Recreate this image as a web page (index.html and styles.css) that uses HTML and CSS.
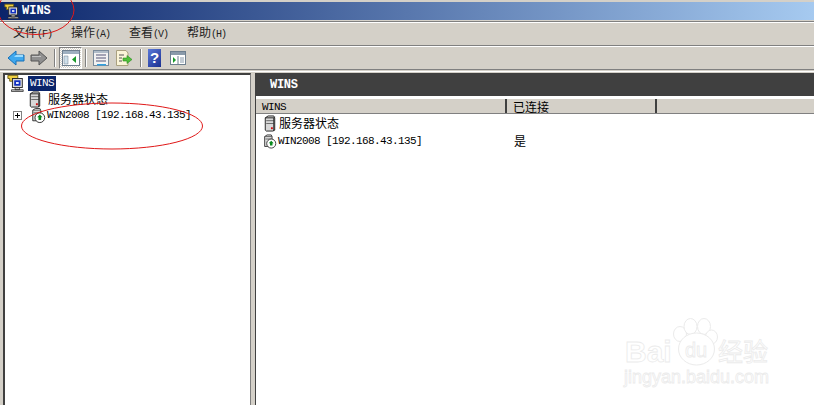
FILE: index.html
```html
<!DOCTYPE html>
<html lang="zh">
<head>
<meta charset="utf-8">
<title>WINS</title>
<link rel="stylesheet" href="styles.css">
</head>
<body>
<svg class="defs" width="0" height="0">
  <defs>
    <symbol id="server" viewBox="0 0 14 18">
      <path d="M2 3 L5 1 H11 L12 3 V16 L10 17 H3 L2 16 Z" fill="#d8d8d8" stroke="#222"/>
      <path d="M2 3 H11 L12 2" fill="none" stroke="#222"/>
      <path d="M3 6 H11 M3 9 H11" stroke="#666"/>
      <path d="M11 3 V17" stroke="#222"/>
      <rect x="8" y="13" width="2" height="2" fill="#d01010"/>
    </symbol>
    <symbol id="winsrv" viewBox="0 0 17 18">
      <path d="M2 3 L5 1 H10 L11 3 V15 H2 Z" fill="#ddd" stroke="#222"/>
      <path d="M2 3 H11 M3 6 H10" stroke="#555" fill="none"/>
      <circle cx="10" cy="11.500" r="5.500" fill="#fff" stroke="#222"/>
      <path d="M10 8 L13 11 H11.500 V14 H8.500 V11 H7 Z" fill="#0a8a1e"/>
    </symbol>
    <symbol id="wins" viewBox="0 0 20 20">
      <path d="M1 1.500 H12 V5 H7 V8 H3 V5 H1 Z" fill="#f0d040" stroke="#6a5a10"/>
      <rect x="6" y="5" width="11" height="10" fill="#d8d8d8" stroke="#222"/>
      <rect x="8" y="7" width="7" height="6" fill="#1030c0"/>
      <rect x="10" y="9" width="3" height="2" fill="#fff"/>
      <path d="M5 17.500 H18 V19.500 H5 Z M9 15 H14 V17.500 H9 Z" fill="#c8c8c8" stroke="#222" stroke-width=".8"/>
    </symbol>
  </defs>
</svg>

<header class="titlebar">
  <svg class="title-icon"><use href="#wins"/></svg>
  <span class="title-text">WINS</span>
</header>

<nav class="menubar">
  <span class="menu-item">文件<span class="mono paren">(F)</span></span>
  <span class="menu-item">操作<span class="mono paren">(A)</span></span>
  <span class="menu-item">查看<span class="mono paren">(V)</span></span>
  <span class="menu-item">帮助<span class="mono paren">(H)</span></span>
</nav>

<div class="toolbar">
  <svg class="tool" viewBox="0 0 18 16"><path d="M1 8 L9 1 V5 H17 V11 H9 V15 Z" fill="#3fa8ee" stroke="#1670b8"/><path d="M9 5 H16 V7 H7 Z" fill="#9bdcff"/></svg>
  <svg class="tool tool-gap" viewBox="0 0 18 16"><path d="M17 8 L9 1 V5 H1 V11 H9 V15 Z" fill="#8f8f8f" stroke="#555"/><path d="M2 6 H11 V7 H2 Z" fill="#c4c4c4"/></svg>
  <span class="sep sep-a"></span>
  <span class="tool-on">
    <svg class="tool-wide" viewBox="0 0 18 16"><rect x=".5" y=".5" width="17" height="15" fill="#fff" stroke="#6e7f8f"/><rect x="1" y="1" width="16" height="3" fill="#9fb0c0"/><path d="M2 6 H6 V14 H2 Z" fill="#cfe0ea" stroke="#6e7f8f" stroke-width=".5"/><path d="M14 6 L10 9.500 L14 13 Z" fill="#1a9a2a"/></svg>
  </span>
  <span class="sep sep-b"></span>
  <svg class="tool" viewBox="0 0 18 16"><rect x="1.500" y=".5" width="15" height="15" fill="#f2f2f2" stroke="#7a8a9a"/><rect x="2" y="1" width="14" height="2" fill="#b0bcc8"/><path d="M4 5 H14 M4 8 H14 M4 11 H14" stroke="#557"/><rect x="5" y="14" width="9" height="1.500" fill="#30a0e0"/></svg>
  <svg class="tool tool-gap" viewBox="0 0 18 16"><path d="M1.500 .5 H11 L13 3 V15.500 H1.500 Z" fill="#fbf4d8" stroke="#aaa080"/><path d="M4 5 H9 M4 8 H7 M4 11 H7" stroke="#555"/><path d="M8 8 H12 V5.500 L17 9.500 L12 13.500 V11 H8 Z" fill="#4fbf3a" stroke="#2a8a20" stroke-width=".6"/></svg>
  <span class="sep sep-c"></span>
  <span class="help">?</span>
  <svg class="tool tool-last" viewBox="0 0 18 16"><rect x="1.500" y="1.500" width="15" height="13" fill="#fff" stroke="#6e7f8f"/><rect x="2" y="2" width="14" height="3" fill="#8a9aaa"/><path d="M9 6 V14" stroke="#6e7f8f"/><path d="M4 7 L7 10 L4 13 Z" fill="#1a9a2a"/><path d="M11 8 H15 M11 10 H15 M11 12 H15" stroke="#8899aa"/></svg>
</div>

<main class="panes">
  <section class="tree">
    <div class="tree-root">
      <svg class="root-icon"><use href="#wins"/></svg>
      <span class="sel mono">WINS</span>
    </div>
    <div class="tree-row tree-status">
      <svg class="row-icon"><use href="#server"/></svg>
      <span class="cjk">服务器状态</span>
    </div>
    <div class="tree-row tree-host">
      <span class="expander"></span>
      <svg class="row-icon host-icon"><use href="#winsrv"/></svg>
      <span class="mono">WIN2008 [192.168.43.135]</span>
    </div>
  </section>

  <section class="detail">
    <div class="detail-head"><span class="detail-title">WINS</span></div>
    <div class="columns">
      <div class="col col-name mono">WINS</div>
      <div class="col col-state cjk">已连接</div>
      <div class="col col-rest"></div>
    </div>
    <div class="list">
      <div class="list-row">
        <svg class="row-icon"><use href="#server"/></svg>
        <span class="cjk">服务器状态</span>
      </div>
      <div class="list-row">
        <div class="list-name">
          <svg class="row-icon"><use href="#winsrv"/></svg>
          <span class="mono">WIN2008 [192.168.43.135]</span>
        </div>
        <span class="cjk">是</span>
      </div>
    </div>
  </section>
</main>

<svg class="marks" viewBox="0 0 814 405">
  <ellipse cx="36" cy="10" rx="38" ry="24.500"/>
  <ellipse cx="112" cy="126" rx="90.500" ry="23"/>
</svg>

<svg class="watermark" viewBox="0 0 190 90">
  <g class="wm-shape">
    <ellipse cx="60" cy="24" rx="6.500" ry="7.500"/>
    <ellipse cx="70.500" cy="16.500" rx="6.500" ry="8"/>
    <ellipse cx="84" cy="16.500" rx="6.500" ry="8"/>
    <ellipse cx="91.500" cy="27" rx="6" ry="7"/>
    <ellipse cx="76.500" cy="39" rx="18" ry="16"/>
  </g>
  <text class="wm-big" x="5" y="52">Bai</text>
  <text class="wm-du" x="65" y="47">du</text>
  <text class="wm-cn" x="98" y="51">经验</text>
  <text class="wm-url" x="4" y="73">jingyan.baidu.com</text>
</svg>
</body>
</html>
```

FILE: styles.css
```css
* { box-sizing: border-box; }
html, body { margin: 0; height: 100%; }
body {
  width: 814px;
  height: 405px;
  overflow: hidden;
  position: relative;
  background: #d4d0c8;
  color: #000;
  font-family: "Noto Sans CJK SC", sans-serif;
  font-size: 12px;
  padding-top: 2px;
}
.defs { position: absolute; }
.mono { font-family: "Liberation Mono", monospace; font-size: 11px; letter-spacing: -.6px; }
.cjk { font-family: "Noto Sans CJK SC", sans-serif; font-size: 12px; }
.paren { font-size: 10px; letter-spacing: -1px; }

.titlebar {
  height: 18px;
  display: flex;
  align-items: center;
  padding-left: 4px;
  background: linear-gradient(90deg, #0a246a, #a6caf0);
}
.title-icon { width: 16px; height: 16px; }
.title-text {
  margin-left: 2px;
  color: #fff;
  font: bold 12px "Liberation Mono", monospace;
}

.menubar {
  margin-top: 1px;
  height: 25px;
  border-top: 1px solid #808080;
  border-bottom: 1px solid #808080;
  box-shadow: inset 0 1px 0 #fff;
  display: flex;
  align-items: center;
  padding-left: 13px;
}
.menu-item { width: 58px; flex: none; line-height: 22px; color: #222; }

.toolbar {
  height: 24px;
  border-top: 1px solid #fff;
  border-bottom: 1px solid #808080;
  display: flex;
  align-items: center;
  padding-left: 7px;
}
.tool { width: 18px; height: 16px; flex: none; }
.tool-gap { margin-left: 5px; }
.tool-last { margin-left: 8px; }
.sep { width: 2px; height: 18px; flex: none; border-left: 1px solid #808080; border-right: 1px solid #fff; }
.sep-a { margin: 0 3px 0 6px; }
.sep-b { margin: 0 5px 0 3px; }
.sep-c { margin: 0 6px 0 7px; }
.tool-on {
  width: 23px;
  height: 22px;
  flex: none;
  display: flex;
  align-items: center;
  justify-content: center;
  border: 1px solid #808080;
  border-right-color: #fff;
  border-bottom-color: #fff;
  background: repeating-conic-gradient(#fff 0 25%, #d4d0c8 0 50%) 0 0 / 2px 2px;
}
.tool-wide { width: 18px; height: 16px; }
.help {
  width: 13px;
  height: 18px;
  flex: none;
  background: linear-gradient(135deg, #5a78d8, #1a2f90);
  color: #fff;
  font: bold 15px/18px "Liberation Sans", sans-serif;
  text-align: center;
}

.panes {
  margin-top: 1px;
  height: 334px;
  display: flex;
  padding: 1px 0 0 3px;
  gap: 4px;
  border-top: 1px solid #fff;
}
.tree {
  width: 248px;
  height: 340px;
  flex: none;
  background: #fff;
  border: 1px solid #808080;
  border-top: 2px solid #404040;
  border-left: 2px solid #404040;
  padding: 0 0 0 2px;
}
.tree-root { display: flex; align-items: center; height: 16px; }
.root-icon { width: 18px; height: 18px; flex: none; }
.sel {
  margin-left: 3px;
  background: #0a246a;
  color: #fff;
  padding: 0 2px;
  line-height: 15px;
}
.tree-row { display: flex; align-items: center; height: 16px; }
.tree-status { padding-left: 21px; gap: 6px; line-height: 16px; }
.tree-host { padding-left: 6px; }
.row-icon { width: 14px; height: 17px; flex: none; }
.host-icon { margin-left: 9px; margin-right: 1px; width: 15px; }
.expander {
  width: 9px;
  height: 9px;
  flex: none;
  border: 1px solid #808080;
  background:
    linear-gradient(#000, #000) center / 5px 1px no-repeat,
    linear-gradient(#000, #000) center / 1px 5px no-repeat;
}

.detail {
  flex: 1;
  height: 340px;
  background: #fff;
  border-left: 1px solid #404040;
  border-top: 1px solid #404040;
}
.detail-head {
  height: 22px;
  background: #404040;
  display: flex;
  align-items: center;
  padding-left: 14px;
}
.detail-title {
  color: #fff;
  font: bold 12px "Liberation Mono", monospace;
  letter-spacing: -.3px;
}
.columns {
  margin-top: 2px;
  height: 16px;
  display: flex;
  background: #d4d0c8;
  border-top: 1px solid #fff;
  border-bottom: 1px solid #808080;
}
.col { height: 100%; padding-left: 6px; line-height: 16px; border-right: 2px solid #404040; }
.col-name { width: 251px; }
.col-state { width: 150px; }
.col-rest { flex: 1; border-right: 0; }
.list-row { display: flex; align-items: center; height: 18px; padding-left: 7px; gap: 2px; line-height: 16px; }
.list-name { width: 249px; display: flex; align-items: center; gap: 1px; }

.marks {
  position: absolute;
  inset: 0;
  width: 814px;
  height: 405px;
  pointer-events: none;
}
.marks ellipse { fill: none; stroke: #e01818; stroke-width: 1; }

.watermark {
  position: absolute;
  left: 620px;
  top: 310px;
  width: 190px;
  height: 90px;
  pointer-events: none;
}
.wm-shape { fill: #fff; stroke: #ebebeb; stroke-width: 1; }
.watermark text { fill: #fff; stroke: #ebebeb; stroke-width: .8; font-family: "Liberation Sans", sans-serif; }
.wm-big { font-size: 30px; font-weight: bold; }
.wm-du { font-size: 20px; }
.watermark .wm-cn { font-family: "Noto Sans CJK SC", sans-serif; font-size: 25px; }
.wm-url { font-size: 18px; }
```
